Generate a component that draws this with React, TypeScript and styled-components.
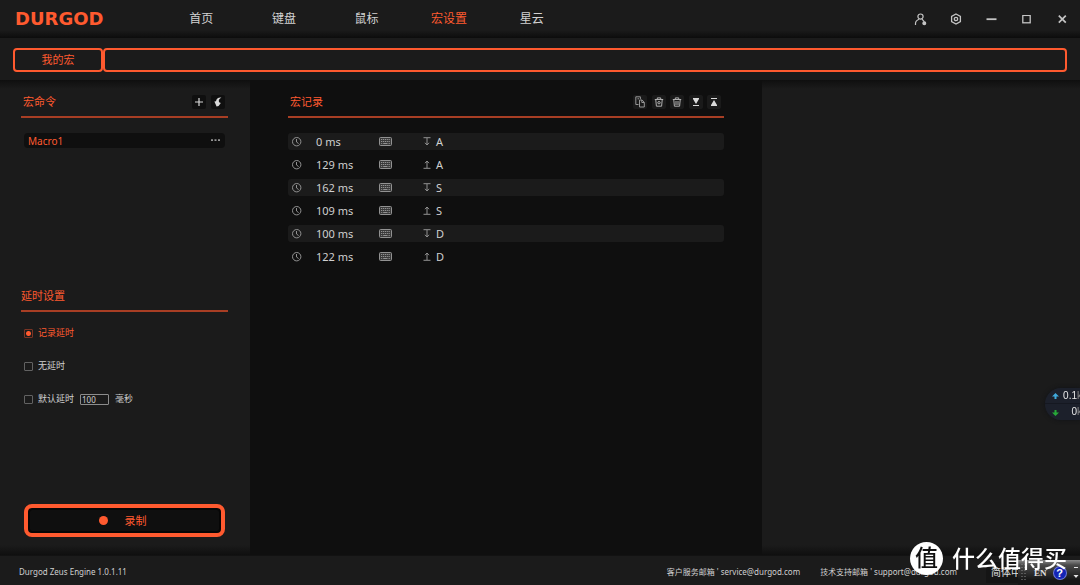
import React, { useState } from "react";
import styled, { createGlobalStyle, css } from "styled-components";

const accent = "#ff5a2f";
const panel = "#1b1b1b";
const deep = "#0f0f0f";

const GlobalStyle = createGlobalStyle`
  * { box-sizing: border-box; }
  body {
    margin: 0;
    background: ${panel};
    color: #c8c8c8;
    font-family: "Noto Sans", "Noto Sans CJK SC", sans-serif;
    font-size: 11px;
    line-height: 16px;
  }
  button, input {
    font: inherit;
    color: inherit;
    margin: 0;
    padding: 0;
    border: 0;
    background: none;
  }
  button { cursor: pointer; }
  svg { display: block; }
  a { color: inherit; text-decoration: none; }
  h1, h2, ul, ol { margin: 0; padding: 0; font: inherit; list-style: none; }
`;

const Page = styled.div`
  display: flex;
  flex-direction: column;
  min-height: 100vh;
  overflow: hidden;
`;

const Header = styled.header`
  display: flex;
  align-items: center;
  height: 38px;
  padding: 0 9px 0 15px;
  background: linear-gradient(${panel} 30px, #0c0c0c 38px);
`;

const Logo = styled.h1`
  width: 145px;
  color: ${accent};
  font-family: "DejaVu Sans", sans-serif;
  font-size: 18px;
  font-weight: 700;
  line-height: 20px;
`;

const Nav = styled.nav`
  display: grid;
  grid-template-columns: repeat(5, 1fr);
  width: 413px;
  font-size: 12px;
  text-align: center;
`;

const NavLink = styled.a<{ $active?: boolean }>`
  color: ${(p) => (p.$active ? accent : "#d2d2d2")};
`;

const WindowTools = styled.div`
  display: flex;
  justify-content: space-between;
  width: 160px;
  margin-left: auto;
`;

const WindowButton = styled.button`
  display: grid;
  place-items: center;
  width: 18px;
  height: 18px;
  color: #c4c4c4;
`;

const ProfileBar = styled.div`
  display: flex;
  padding: 10px 13px 8px;
`;

const frame = css`
  height: 24px;
  border: 2px solid ${accent};
  border-radius: 4px;
`;

const ProfileTab = styled.button`
  ${frame}
  width: 90px;
  color: ${accent};
`;

const ProfileStrip = styled.div`
  ${frame}
  flex: 1;
`;

const Body = styled.main`
  flex: 1;
  display: grid;
  grid-template-columns: 250px 512fr 318fr;
`;

const shaded = css`
  background:
    linear-gradient(#0f0f0f, rgba(27, 27, 27, 0)) top / 100% 9px no-repeat,
    linear-gradient(rgba(27, 27, 27, 0), #0f0f0f) bottom / 100% 10px no-repeat,
    ${panel};
`;

const Sidebar = styled.aside`
  ${shaded}
  display: flex;
  flex-direction: column;
  padding: 0 22px 18px 21px;
`;

const Recorder = styled.section`
  padding: 0 38px;
  background: ${deep};
`;

const Details = styled.aside`
  ${shaded}
`;

const SectionHead = styled.div<{ $inset?: boolean }>`
  display: flex;
  align-items: center;
  justify-content: space-between;
  height: 38px;
  padding: 8px 3px 0 ${(p) => (p.$inset ? 2 : 0)}px;
  border-bottom: 2px solid #a83e24;
  color: ${accent};
`;

const Tools = styled.div<{ $width: number }>`
  display: flex;
  justify-content: space-between;
  width: ${(p) => p.$width}px;
`;

const ToolButton = styled.button<{ $dark?: boolean }>`
  display: grid;
  place-items: center;
  width: 14px;
  height: 14px;
  border-radius: 2px;
  background: ${(p) => (p.$dark ? deep : "#1a1a1a")};
  color: #c0c0c0;
`;

const MacroList = styled.ul`
  min-height: 156px;
  padding: 15px 3px 0;
`;

const MacroItem = styled.li`
  display: flex;
  align-items: center;
  justify-content: space-between;
  height: 15px;
  padding: 0 5px 0 4px;
  border-radius: 4px;
  background: ${deep};
  font-size: 10px;
`;

const MacroName = styled.button`
  color: ${accent};
`;

const MoreButton = styled.button`
  height: 9px;
  color: #949494;
`;

const DelayOptions = styled.div`
  display: flex;
  flex-direction: column;
  gap: 17px;
  padding: 13px 3px 0;
  font-size: 9px;
`;

const OptionRow = styled.div`
  display: flex;
  align-items: center;
  gap: 6px;
  height: 16px;
`;

const OptionLabel = styled.label<{ $active: boolean }>`
  display: flex;
  align-items: center;
  gap: 5px;
  color: ${(p) => (p.$active ? accent : "#d0d0d0")};
`;

const Radio = styled.input`
  appearance: none;
  width: 9px;
  height: 9px;
  border: 1px solid #626262;
  border-radius: 1px;
  &:checked {
    border-color: #7a3424;
    background: radial-gradient(circle, ${accent} 2px, transparent 3px);
  }
`;

const DelayInput = styled.input`
  width: 29px;
  height: 11px;
  padding: 0 1px;
  border: 1px solid #8c8c8c;
  border-radius: 1px;
  color: #d0d0d0;
  font-size: 8px;
  line-height: 9px;
`;

const RecordButton = styled.button`
  display: flex;
  align-items: center;
  justify-content: center;
  gap: 17px;
  height: 33px;
  margin: auto 3px 0;
  padding-right: 4px;
  border: 4px solid ${accent};
  border-radius: 8px;
  background: ${deep};
  box-shadow: inset 0 0 0 2px #060606;
  color: ${accent};
`;

const RecordDot = styled.span`
  width: 9px;
  height: 9px;
  border-radius: 50%;
  background: ${accent};
`;

const EventList = styled.ol`
  display: grid;
  gap: 6px;
  padding-top: 15px;
`;

const EventRow = styled.li`
  display: grid;
  grid-template-columns: 24px 63px 44px 13px 1fr;
  align-items: center;
  height: 17px;
  padding-left: 4px;
  border-radius: 3px;
  color: #d0d0d0;
  &:nth-child(odd) { background: #1b1b1b; }
  svg { color: #929292; }
`;

const Footer = styled.footer`
  display: flex;
  align-items: center;
  gap: 20px;
  height: 30px;
  padding: 2px 123px 0 19px;
  border-top: 1px solid #121212;
  color: #d0d0d0;
  font-size: 8px;
`;

const Version = styled.span`
  margin-right: auto;
`;

const NetMeter = styled.div`
  position: fixed;
  top: 388px;
  right: 0;
  width: 35px;
  height: 32px;
  padding-left: 7px;
  overflow: hidden;
  border-radius: 16px 0 0 16px;
  background: linear-gradient(#1c202b 15px, #151821 15px, #151821 16px, #1c202b 16px);
  box-shadow: 0 0 4px #101216;
  color: #e8e8e8;
  font-family: "Liberation Sans", sans-serif;
  font-size: 10px;
  white-space: nowrap;
`;

const MeterRow = styled.div`
  display: grid;
  grid-template-columns: 8px 17px 8px;
  align-items: center;
  height: 16px;
  text-align: right;
`;

const Unit = styled.span`
  color: #8c8c8c;
  text-align: left;
`;

const LanguageBar = styled.div`
  position: fixed;
  right: 0;
  bottom: 0;
  display: flex;
  align-items: center;
  height: 25px;
  color: #e0e0e0;
`;

const InputMode = styled.span`
  width: 32px;
  padding: 4px 0 4px 5px;
  overflow: hidden;
  background: #151515;
  font-size: 10px;
  line-height: 13px;
  white-space: nowrap;
`;

const LanguageTools = styled.div`
  display: flex;
  align-items: center;
  gap: 7px;
  width: 62px;
  height: 25px;
  padding-left: 3px;
  background: linear-gradient(#8c8c8c, #4a4a4a 5px, #161616 20px);
  font-family: "Liberation Serif", serif;
  font-size: 9px;
  font-weight: 700;
`;

const HelpButton = styled.button`
  width: 12px;
  height: 12px;
  border-radius: 50%;
  background: #1424b4;
  box-shadow: 0 0 0 1px #6d79d8;
  color: #fff;
  font-family: "Liberation Sans", sans-serif;
  font-size: 11px;
  font-weight: 700;
  line-height: 12px;
`;

const Watermark = styled.div`
  position: fixed;
  right: 13px;
  bottom: 10px;
  display: flex;
  align-items: center;
  gap: 9px;
  color: #fff;
  font-size: 23px;
  font-weight: 500;
  line-height: 34px;
`;

const Seal = styled.span`
  width: 33px;
  height: 33px;
  border-radius: 50%;
  background: #fff;
  color: #111;
  font-size: 23px;
  line-height: 31px;
  text-align: center;
`;

const UserIcon = () => (
  <svg width="13" height="13" viewBox="0 0 13 13" fill="none" stroke="currentColor" strokeWidth="1.2">
    <circle cx="6.5" cy="3.6" r="2.6" />
    <path d="M1.5 12V10.5C1.5 8.5 3 7 5 6.2M8 6.2L10.2 8.6" />
    <circle cx="10.3" cy="10.2" r="1.4" fill="currentColor" />
  </svg>
);

const SettingsIcon = () => (
  <svg width="12" height="12" viewBox="0 0 12 12" fill="none" stroke="currentColor" strokeWidth="1.3">
    <path d="M6 1L10.4 3.3V8.7L6 11L1.6 8.7V3.3Z" />
    <circle cx="6" cy="6" r="1.7" />
  </svg>
);

const MinimizeIcon = () => (
  <svg width="11" height="11" viewBox="0 0 11 11" stroke="currentColor" strokeWidth="1.8">
    <path d="M0.5 5.2H10.5" />
  </svg>
);

const MaximizeIcon = () => (
  <svg width="9" height="9" viewBox="0 0 9 9" fill="none" stroke="currentColor" strokeWidth="1.3">
    <rect x="0.8" y="0.4" width="7.4" height="7.4" />
  </svg>
);

const CloseIcon = () => (
  <svg width="9" height="9" viewBox="0 0 9 9" stroke="currentColor" strokeWidth="1.7">
    <path d="M0.8 0.6L7.8 7.6M7.8 0.6L0.8 7.6" />
  </svg>
);

const PlusIcon = () => (
  <svg width="10" height="10" viewBox="0 0 10 10" stroke="#d8d8d8" strokeWidth="1.2">
    <path d="M1 5H9M5 1V9" />
  </svg>
);

const ImportIcon = () => (
  <svg width="10" height="10" viewBox="0 0 10 10" fill="#d8d8d8">
    <path d="M8.4 0.6C5.4 0.2 3.2 1.7 3 4.2L1.4 4.4L3.6 9.4L5.6 8.9L7.8 5.9L6.1 5.2C5.2 3.4 6.4 1.8 8.4 0.6Z" />
  </svg>
);

const DotsIcon = () => (
  <svg width="9" height="9" viewBox="0 0 9 9" fill="currentColor">
    <path d="M0 3.2H2V5H0ZM3.5 3.2H5.5V5H3.5ZM7 3.2H9V5H7Z" />
  </svg>
);

const CopyIcon = () => (
  <svg width="10" height="12" viewBox="0 0 10 12" fill="none" stroke="#969696">
    <path d="M3.5 8.5H0.8V0.8H5.4V3M2.5 2.8H4" />
    <path d="M4.5 4H7L9.3 6.2V11H4.5ZM6.8 4V6.5H9" />
  </svg>
);

const TrashIcon = ({ clear = false }: { clear?: boolean }) => (
  <svg width="10" height="10" viewBox="0 0 10 10" fill="none" stroke="#b0b0b0">
    <path d="M0.8 2.5H9.2M3.3 2.2V0.9H6.7V2.2M1.8 3L2.4 9.2H7.6L8.2 3" />
    {clear ? <path d="M4 4V8M6 4V8" /> : <circle cx="5" cy="5.7" r="1.2" />}
  </svg>
);

const MoveIcon = ({ up = false }: { up?: boolean }) => (
  <svg width="8" height="10" viewBox="0 0 8 10" fill="#dadada">
    {up ? <path d="M1 1H7V2H1ZM4 3L7 8V9H1V8Z" /> : <path d="M1 8H7V9H1ZM1 1H7V2L4 7L1 2Z" />}
  </svg>
);

const ClockIcon = () => (
  <svg width="10" height="10" viewBox="0 0 10 10" fill="none" stroke="currentColor">
    <circle cx="4.7" cy="4.7" r="4.2" />
    <path d="M4.5 2V5L6.6 6.6" />
  </svg>
);

const KeyboardIcon = () => (
  <svg width="13" height="9" viewBox="0 0 13 9" fill="none" stroke="currentColor">
    <rect x="0.5" y="0.5" width="12" height="8" rx="1" fill="#3a3a3a" />
    <path d="M2 2.5H11M2 4.5H11" strokeDasharray="1.2 0.7" />
    <path d="M2.2 6.5H3.2M4.2 6.5H8.5M9.6 6.5H10.8" />
  </svg>
);

const KeyArrowIcon = ({ up }: { up: boolean }) => (
  <svg width="8" height="9" viewBox="0 0 8 9" fill="none" stroke="currentColor">
    {up ? (
      <path d="M0.5 8.3H7.5M4 8V1.2M2 3.2L4 1L6 3.2" />
    ) : (
      <path d="M0.5 0.7H7.5M4 1V7.8M2 5.8L4 8L6 5.8" />
    )}
  </svg>
);

const MeterArrow = ({ up = false }: { up?: boolean }) => (
  <svg width="7" height="7" viewBox="0 0 7 7" fill={up ? "#3fa9dc" : "#27a838"}>
    {up ? <path d="M3.5 0L7 3.6H4.5V6H2.5V3.6H0Z" /> : <path d="M3.5 7L7 3.4H4.5V1H2.5V3.4H0Z" />}
  </svg>
);

const BarGrip = () => (
  <svg width="6" height="18" viewBox="0 0 6 18" stroke="#8a8a8a" strokeDasharray="1 2">
    <path d="M1 0V18M4 0V18" />
  </svg>
);

const BarMenuIcon = () => (
  <svg width="6" height="14" viewBox="0 0 6 14" fill="#e6e6e6">
    <path d="M1 1H5V2H1ZM0.5 9H5.5L3 12Z" />
  </svg>
);

const navItems = ["首页", "键盘", "鼠标", "宏设置", "星云"];

const windowTools = [
  { label: "用户", icon: <UserIcon /> },
  { label: "设置", icon: <SettingsIcon /> },
  { label: "最小化", icon: <MinimizeIcon /> },
  { label: "最大化", icon: <MaximizeIcon /> },
  { label: "关闭", icon: <CloseIcon /> },
];

const recordTools = [
  { label: "复制", icon: <CopyIcon /> },
  { label: "删除", icon: <TrashIcon /> },
  { label: "清空", icon: <TrashIcon clear /> },
  { label: "下移", icon: <MoveIcon /> },
  { label: "上移", icon: <MoveIcon up /> },
];

const events = [
  { ms: 0, key: "A", up: false },
  { ms: 129, key: "A", up: true },
  { ms: 162, key: "S", up: false },
  { ms: 109, key: "S", up: true },
  { ms: 100, key: "D", up: false },
  { ms: 122, key: "D", up: true },
];

const delayModes = [
  { id: "record", label: "记录延时" },
  { id: "none", label: "无延时" },
  { id: "fixed", label: "默认延时" },
];

export default function App() {
  const [mode, setMode] = useState("record");
  const [delay, setDelay] = useState("100");

  return (
    <Page>
      <GlobalStyle />
      <Header>
        <Logo>DURGOD</Logo>
        <Nav>
          {navItems.map((item) => (
            <NavLink key={item} href="#" $active={item === "宏设置"}>
              {item}
            </NavLink>
          ))}
        </Nav>
        <WindowTools>
          {windowTools.map((tool) => (
            <WindowButton key={tool.label} aria-label={tool.label}>
              {tool.icon}
            </WindowButton>
          ))}
        </WindowTools>
      </Header>

      <ProfileBar>
        <ProfileTab>我的宏</ProfileTab>
        <ProfileStrip />
      </ProfileBar>

      <Body>
        <Sidebar>
          <SectionHead $inset>
            <h2>宏命令</h2>
            <Tools $width={33}>
              <ToolButton $dark aria-label="新建">
                <PlusIcon />
              </ToolButton>
              <ToolButton $dark aria-label="导入">
                <ImportIcon />
              </ToolButton>
            </Tools>
          </SectionHead>
          <MacroList>
            <MacroItem>
              <MacroName>Macro1</MacroName>
              <MoreButton aria-label="更多">
                <DotsIcon />
              </MoreButton>
            </MacroItem>
          </MacroList>

          <SectionHead>
            <h2>延时设置</h2>
          </SectionHead>
          <DelayOptions>
            {delayModes.map(({ id, label }) => (
              <OptionRow key={id}>
                <OptionLabel $active={mode === id}>
                  <Radio type="radio" name="delay" checked={mode === id} onChange={() => setMode(id)} />
                  {label}
                </OptionLabel>
                {id === "fixed" && (
                  <>
                    <DelayInput
                      id="delay-ms"
                      aria-label="默认延时毫秒"
                      value={delay}
                      onChange={(e) => setDelay(e.target.value)}
                    />
                    <label htmlFor="delay-ms">毫秒</label>
                  </>
                )}
              </OptionRow>
            ))}
          </DelayOptions>

          <RecordButton>
            <RecordDot />
            录制
          </RecordButton>
        </Sidebar>

        <Recorder>
          <SectionHead $inset>
            <h2>宏记录</h2>
            <Tools $width={88}>
              {recordTools.map((tool) => (
                <ToolButton key={tool.label} aria-label={tool.label}>
                  {tool.icon}
                </ToolButton>
              ))}
            </Tools>
          </SectionHead>
          <EventList>
            {events.map((event, i) => (
              <EventRow key={i}>
                <ClockIcon />
                <span>{event.ms} ms</span>
                <KeyboardIcon />
                <KeyArrowIcon up={event.up} />
                <span>{event.key}</span>
              </EventRow>
            ))}
          </EventList>
        </Recorder>

        <Details />
      </Body>

      <Footer>
        <Version>Durgod Zeus Engine 1.0.1.11</Version>
        <a href="mailto:service@durgod.com">客户服务邮箱 ' service@durgod.com</a>
        <a href="mailto:support@durgod.com">技术支持邮箱 ' support@durgod.com</a>
      </Footer>

      <NetMeter>
        <MeterRow>
          <MeterArrow up />
          <span>0.1</span>
          <Unit>k</Unit>
        </MeterRow>
        <MeterRow>
          <MeterArrow />
          <span>0</span>
          <Unit>k</Unit>
        </MeterRow>
      </NetMeter>

      <LanguageBar>
        <InputMode>简体中</InputMode>
        <LanguageTools>
          <BarGrip />
          <span>EN</span>
          <HelpButton>?</HelpButton>
          <BarMenuIcon />
        </LanguageTools>
      </LanguageBar>

      <Watermark>
        <Seal>值</Seal>
        <span>什么值得买</span>
      </Watermark>
    </Page>
  );
}
